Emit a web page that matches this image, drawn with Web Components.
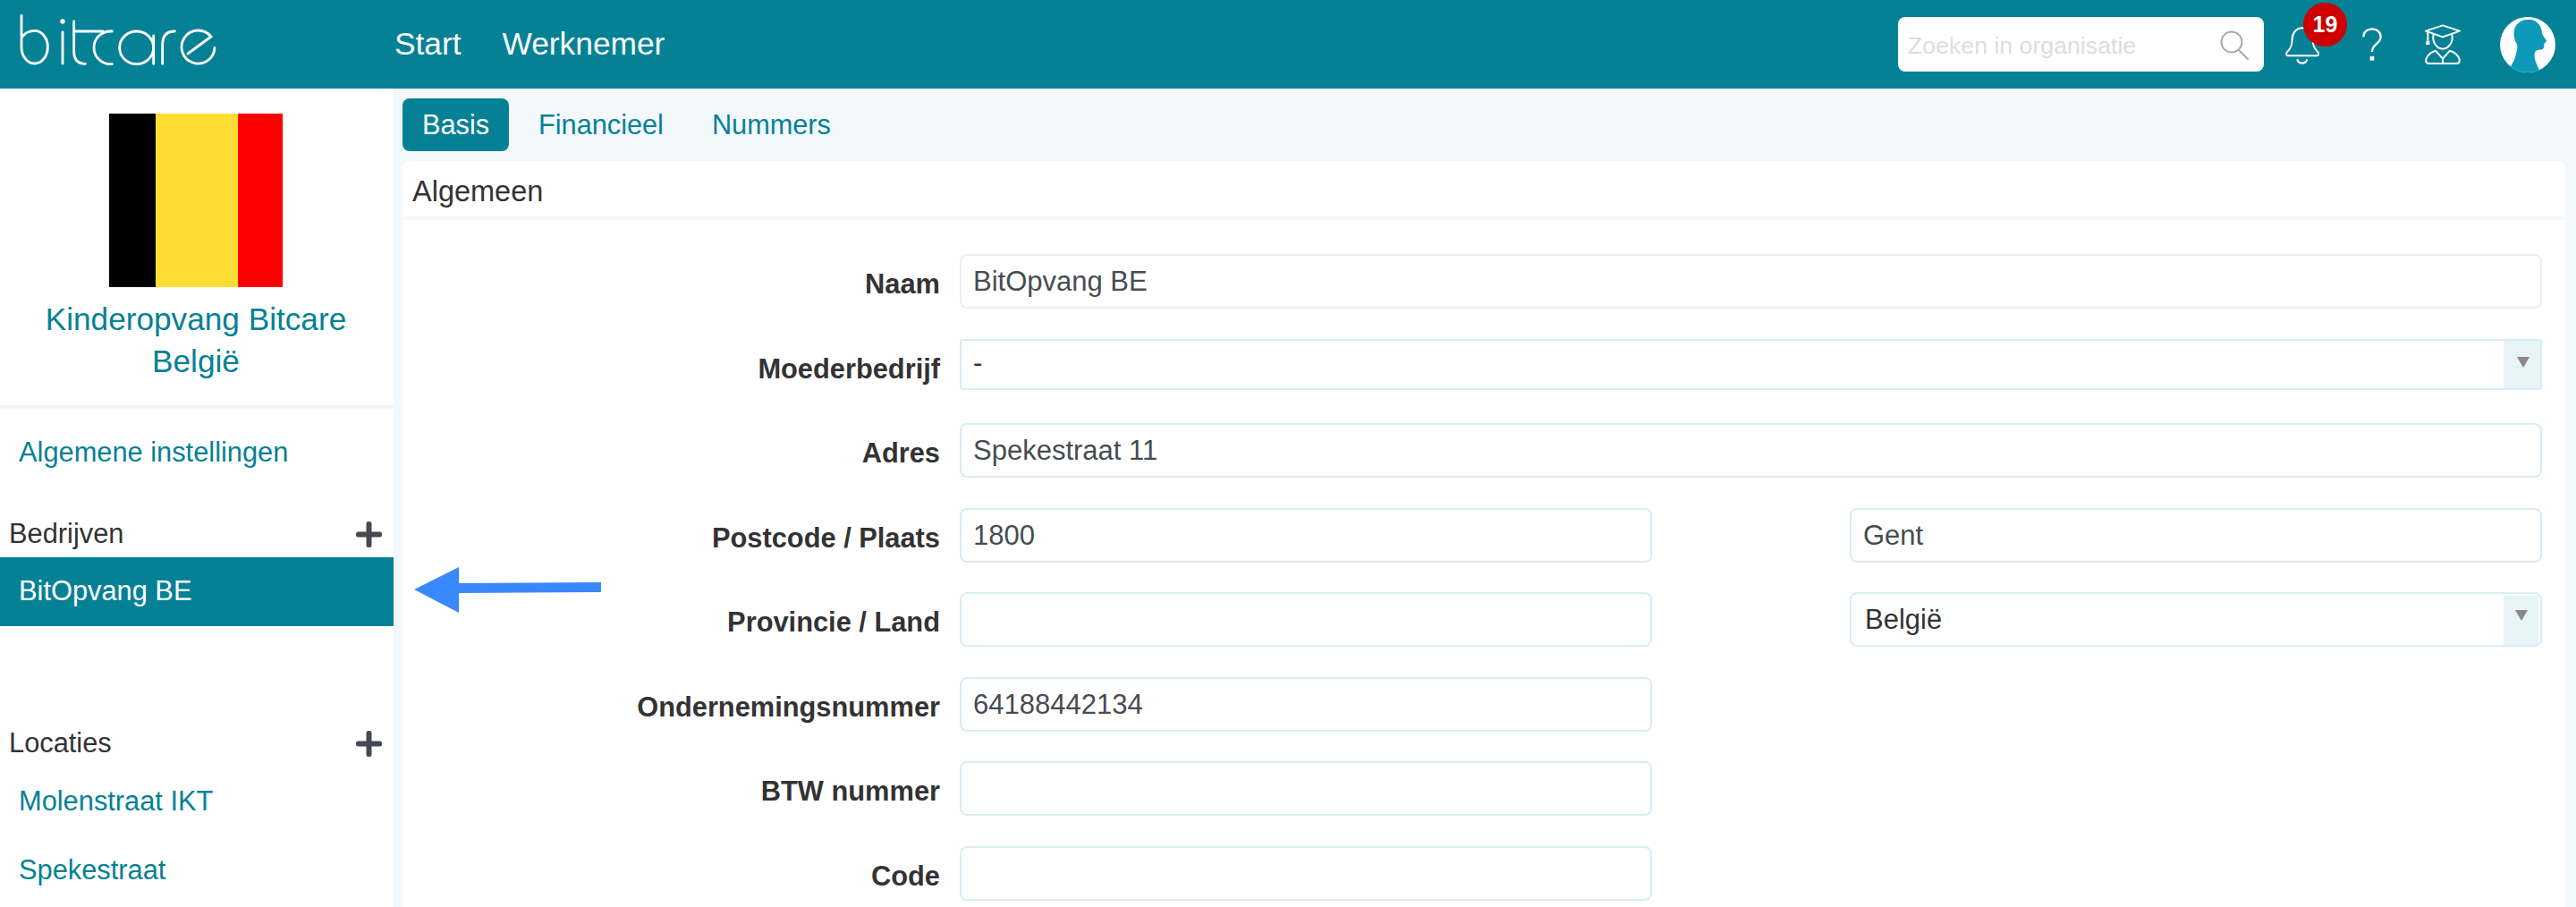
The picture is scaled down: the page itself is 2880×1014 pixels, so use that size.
<!DOCTYPE html>
<html lang="nl"><head><meta charset="utf-8"><title>Bitcare</title>
<style>
html,body{margin:0;height:100%;overflow:hidden;background:#f3f8fb;font-family:"Liberation Sans",Arial,sans-serif;color:#333}
</style></head><body>
<bc-app>
  <bc-topbar slot="top">
    <bc-nav-link>Start</bc-nav-link>
    <bc-nav-link>Werknemer</bc-nav-link>
  </bc-topbar>
  <bc-sidebar slot="side">
    <bc-side-link>Algemene instellingen</bc-side-link>
    <bc-side-head style="margin-top:31px">Bedrijven</bc-side-head>
    <bc-side-link active style="margin-top:6px">BitOpvang BE</bc-side-link>
    <bc-side-head style="margin-top:111px">Locaties</bc-side-head>
    <bc-side-link style="margin-top:9px">Molenstraat IKT</bc-side-link>
    <bc-side-link style="margin-top:1px">Spekestraat</bc-side-link>
  </bc-sidebar>
  <bc-tabs slot="main">
    <bc-tab active>Basis</bc-tab><bc-tab>Financieel</bc-tab><bc-tab>Nummers</bc-tab>
  </bc-tabs>
  <bc-card slot="main" heading="Algemeen">
    <bc-row label="Naam"><bc-field muted>BitOpvang BE</bc-field></bc-row>
    <bc-row label="Moederbedrijf"><bc-field select square>-</bc-field></bc-row>
    <bc-row label="Adres"><bc-field>Spekestraat 11</bc-field></bc-row>
    <bc-row label="Postcode / Plaats" split><bc-field>1800</bc-field><bc-field>Gent</bc-field></bc-row>
    <bc-row label="Provincie / Land" split><bc-field></bc-field><bc-field select>België</bc-field></bc-row>
    <bc-row label="Ondernemingsnummer" split><bc-field>64188442134</bc-field></bc-row>
    <bc-row label="BTW nummer" split><bc-field></bc-field></bc-row>
    <bc-row label="Code" split><bc-field></bc-field></bc-row>
  </bc-card>
  <bc-arrow slot="over"></bc-arrow>
</bc-app>
<script>
const el=(name,html,init)=>customElements.define(name,class extends HTMLElement{
  constructor(){super();this.attachShadow({mode:'open'}).innerHTML=typeof html==='function'?html(this):html;}
  connectedCallback(){init&&init(this)}
});
el('bc-app',`<style>
:host{display:grid;grid-template:99px 915px/440px 1fr;height:1014px;position:relative;overflow:hidden}
.top{grid-column:1/3}.side{background:#fff;overflow:hidden}
.main{padding:11px 12px 0 10px;overflow:hidden}
</style><div class="top"><slot name="top"></slot></div><div class="side"><slot name="side"></slot></div><div class="main"><slot name="main"></slot></div><slot name="over"></slot>`);
el('bc-topbar',`<style>
:host{display:flex;align-items:center;height:99px;background:#058196;color:#fff}
.logo{width:280px;height:99px;flex:none}
nav{display:flex;gap:46px;margin-left:161px}
.r{margin-left:auto;display:flex;align-items:center;height:99px;position:relative}
.search{width:409px;height:61px;background:#fff;border-radius:8px;display:flex;align-items:center;box-sizing:border-box;padding:3px 0 0 11px;font-size:26.7px;color:#ddd;position:relative}
.search svg{position:absolute;left:356px;top:12px}
svg{display:block;flex:none}
.bell{margin-left:24px;position:relative;width:38px;height:45px;margin-top:5px}
.badge{position:absolute;left:20px;top:-27px;width:49px;height:49px;border-radius:50%;background:#c00;color:#fff;font:bold 25px/49px "Liberation Sans",Arial,sans-serif;text-align:center}
</style>
<svg class="logo" viewBox="0 0 840 297" fill="none" stroke="#fff" stroke-width="8.5" stroke-linecap="round" role="img" aria-label="bitcare">
<path d="M72 52V158A44 55 0 1 0 116 103C98 103 84 110 74 124"/>
<path d="M210 108V213"/><circle cx="210" cy="72" r="8" fill="#fff" stroke="none"/>
<path d="M248 72V172C248 200 260 214 286 214"/><path d="M248 105H345"/>
<path d="M376 105H370A55 55 0 0 0 370 215H376"/>
<ellipse cx="458" cy="160" rx="57" ry="55"/><path d="M515 120V214"/>
<path d="M545 214V150C545 122 558 105 586 105"/>
<path d="M630 180L708 123A55.500 55.500 0 1 0 720 160"/>
</svg>
<nav><slot></slot></nav>
<div class="r">
<div class="search">Zoeken in organisatie<svg width="40" height="40" viewBox="0 0 40 40" fill="none" stroke="#aaa" stroke-width="2"><ellipse cx="17" cy="16" rx="11.5" ry="11.500"/><path d="M25 25L35 35" stroke-linecap="round"/></svg></div>
<div class="bell"><svg width="38" height="45" viewBox="167 100 115 135" fill="none" stroke="#fff" stroke-width="6" stroke-linecap="round" stroke-linejoin="round"><path d="M225 103C200 103 190 125 190 145C190 165 184 172 172 186C168 192 172 197 178 197H272C278 197 282 192 278 186C266 172 260 165 260 145C260 125 250 103 225 103Z"/><path d="M208 211C212 226 236 226 240 211"/></svg><div class="badge">19</div></div>
<svg style="margin-left:48px" width="22" height="37" viewBox="424 91 66 111" fill="none" stroke="#fff" stroke-width="7"><path d="M428 122C428 104 442 95 457 95C474 95 486 106 486 122C486 146 457 144 457 172"/><rect x="450" y="187" width="14" height="14" fill="#fff" stroke="none"/></svg>
<svg style="margin-left:48px" width="40" height="46" viewBox="630 89 120 138" fill="none" stroke="#fff" stroke-width="6" stroke-linejoin="round" stroke-linecap="round"><path d="M690 93L747 112L690 132L633 112Z"/><path d="M640 116V148"/><rect x="634" y="146" width="12" height="12" fill="#fff" stroke="none"/><path d="M659 124C653 150 672 172 690 172C708 172 727 150 721 124"/><path d="M644 221C632 221 632 210 636 202C642 190 652 182 666 178L690 205L714 178C728 182 738 190 744 202C748 210 748 221 736 221ZM690 205V221"/></svg>
<svg style="margin-left:44px;margin-right:23px" width="62" height="62" viewBox="885 57 186 186"><defs><clipPath id="c"><circle cx="978" cy="150" r="93"/></clipPath><filter id="b"><feGaussianBlur stdDeviation="1.6"/></filter></defs><circle cx="978" cy="150" r="93" fill="#fff"/><path clip-path="url(#c)" filter="url(#b)" fill="#0f9aba" d="M985 65C1010 67 1026 88 1026 112C1030 124 1040 132 1041 137C1040 142 1033 144 1033 148C1034 160 1030 167 1020 167C1006 166 1000 172 1001 190C1003 212 1015 226 1020 245H905C915 232 928 215 935 195C941 175 945 160 942 148C932 130 928 112 935 92C944 74 963 64 985 65Z"/></svg>
</div>`);
el('bc-nav-link',`<style>:host{display:block;font-size:35.3px;line-height:40px;color:#fff;margin-top:-2px}</style><slot></slot>`);
el('bc-sidebar',`<style>
:host{display:block;background:#fff;height:100%}
.org{display:flex;flex-direction:column;align-items:center;padding-top:28px;box-sizing:border-box;height:358px;width:438px;position:relative}
.org::after{content:"";position:absolute;left:0;bottom:0;width:440px;height:4px;background:#f3f3f3}
.flag{display:flex;width:194px;height:194px}
.flag i{display:block;height:100%}
.name{font-size:35.2px;line-height:47px;color:#058196;text-align:center;margin-top:12px;white-space:nowrap}
.list{padding-top:13px}
</style><div class="org"><div class="flag"><i style="width:52px;background:#000"></i><i style="width:92px;background:#fd3"></i><i style="width:50px;background:#f00"></i></div>
<div class="name">Kinderopvang Bitcare<br>België</div></div><div class="list"><slot></slot></div>`);
el('bc-side-link',`<style>
:host{display:block;height:76px;line-height:72px;padding-left:21px;font-size:30.8px;color:#058196}
:host([active]){background:#058196;color:#fff;height:77px;line-height:76px}
</style><slot></slot>`);
el('bc-side-head',`<style>
:host{display:flex;align-items:center;justify-content:space-between;height:40px;line-height:40px;padding:0 13px 0 10px;font-size:30.8px;color:#333}
svg{display:block}
</style><slot></slot><svg width="29" height="29" viewBox="0 0 29 29"><rect x="11.5" y="0" width="6" height="29" rx="2.5" fill="#464a50"/><rect x="0" y="11.5" width="29" height="6" rx="2.5" fill="#464a50"/></svg>`);
el('bc-tabs',`<style>:host{display:flex;gap:12px;height:59px}</style><slot></slot>`);
el('bc-tab',`<style>
:host{display:block;height:59px;line-height:59px;padding:0 21px;font-size:30.7px;color:#058196;border-radius:8px}
:host([active]){background:#058196;color:#fff;padding:0 22px}
</style><slot></slot>`);
el('bc-card',h=>`<style>
:host{display:block;margin-top:11px;background:#fff;border-radius:8px 8px 0 0;height:900px}
.h{height:62px;line-height:68px;padding-left:11px;font-size:32.5px;color:#333;border-bottom:4px solid #f3f8fb}
.b{padding-top:38px;display:flex;flex-direction:column;gap:33.5px}
</style><div class="h">${h.getAttribute('heading')}</div><div class="b"><slot></slot></div>`);
el('bc-row',h=>`<style>
:host{display:flex;height:61px}
.l{width:601px;flex:none;text-align:right;font-weight:bold;font-size:30.8px;line-height:67px;color:#333;white-space:nowrap}
.f{margin-left:22px;margin-right:26px;flex:1;display:grid;grid-template-columns:1fr;min-width:0}
:host([split]) .f{grid-template-columns:1fr 1fr;column-gap:221px}
::slotted(*){min-width:0}
</style><div class="l">${h.getAttribute('label')}</div><div class="f"><slot></slot></div>`);
el('bc-field',h=>`<style>
:host{display:block;box-sizing:border-box;height:61px;border:2px solid #d9edf4;border-radius:8px;background:#fff;padding-left:13px;font-size:31px;line-height:57px;color:#464c52;position:relative;overflow:hidden}
:host([muted]){border-color:#eee}
:host([select]){color:#333;line-height:58px;padding-left:15px}
:host([square]){height:57px;border-radius:3px;padding-left:13px;line-height:50px}
.a{display:none;position:absolute;right:2px;top:2px;bottom:0;width:39px;background:#e6f4f6}
:host([select]) .a{display:block}
:host([square]) .a{right:0;top:0;width:41px}
.a::after{content:"";position:absolute;left:13px;top:16px;border:7px solid transparent;border-top:12px solid #888;border-bottom:0}
:host([square]) .a::after{left:15px;top:18px}
</style><slot></slot><div class="a"></div>`);
el('bc-arrow',`<style>
:host{position:absolute;left:463px;top:630px;width:212px;height:60px;display:block}
</style><svg width="212" height="60" viewBox="0 0 212 60"><path d="M0 29L50 4V22L209 21V32L50 33V55Z" fill="#3a88fe"/></svg>`);
</script>
</body></html>
